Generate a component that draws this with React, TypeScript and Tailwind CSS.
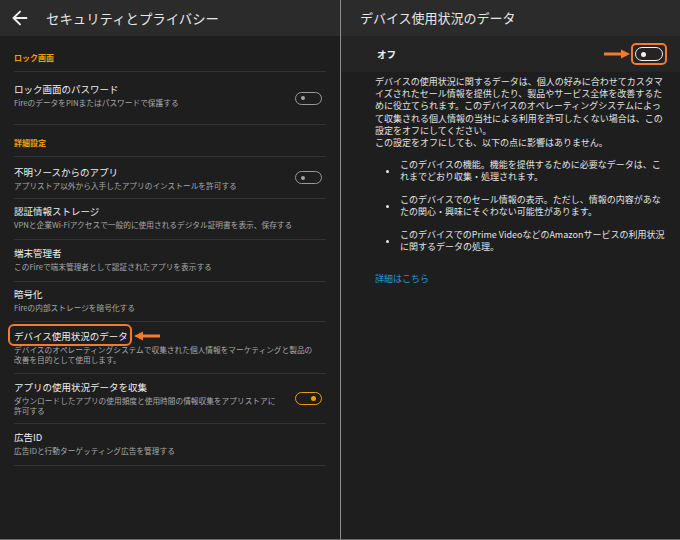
import { ArrowLeft } from "lucide-react";

type Row = {
	title: string;
	sub: string[];
	h: number;
	pt: number;
	toggle?: "off" | "on";
	marked?: boolean;
};

const LOCK_ROWS: Row[] = [
	{
		title: "ロック画面のパスワード",
		sub: ["FireのデータをPINまたはパスワードで保護する"],
		h: 53,
		pt: 10,
		toggle: "off",
	},
];

const ADVANCED_ROWS: Row[] = [
	{
		title: "不明ソースからのアプリ",
		sub: ["アプリストア以外から入手したアプリのインストールを許可する"],
		h: 42,
		pt: 8,
		toggle: "off",
	},
	{
		title: "認証情報ストレージ",
		sub: ["VPNと企業Wi-Fiアクセスで一般的に使用されるデジタル証明書を表示、保存する"],
		h: 41,
		pt: 5,
	},
	{
		title: "端末管理者",
		sub: ["このFireで端末管理者として認証されたアプリを表示する"],
		h: 42,
		pt: 6,
	},
	{
		title: "暗号化",
		sub: ["Fireの内部ストレージを暗号化する"],
		h: 40,
		pt: 5,
	},
	{
		title: "デバイス使用状況のデータ",
		sub: [
			"デバイスのオペレーティングシステムで収集された個人情報をマーケティングと製品の",
			"改善を目的として使用します。",
		],
		h: 52,
		pt: 7,
		marked: true,
	},
	{
		title: "アプリの使用状況データを収集",
		sub: [
			"ダウンロードしたアプリの使用頻度と使用時間の情報収集をアプリストアに",
			"許可する",
		],
		h: 50,
		pt: 6,
		toggle: "on",
	},
	{
		title: "広告ID",
		sub: ["広告IDと行動ターゲッティング広告を管理する"],
		h: 42,
		pt: 6,
	},
];

function Toggle({ on, big }: { on?: boolean; big?: boolean }) {
	if (big) {
		return (
			<div className="flex h-[14px] w-[28px] items-center rounded-full border-[1.5px] border-[#f2f2f2] pl-[5px]">
				<div className="h-[5px] w-[5px] rounded-full bg-[#f2f2f2]" />
			</div>
		);
	}
	return (
		<div
			className={
				on
					? "flex h-[13px] w-[27px] items-center justify-end rounded-full border-[1.5px] border-[#e8a010] pr-[5px]"
					: "flex h-[13px] w-[27px] items-center rounded-full border-[1.5px] border-[#9a9a9a] pl-[5px]"
			}
		>
			<div
				className={
					on
						? "h-[5px] w-[5px] rounded-full bg-[#e8a010]"
						: "h-[4px] w-[4px] rounded-full bg-[#a5a5a5]"
				}
			/>
		</div>
	);
}

function Arrow({ dir }: { dir: "left" | "right" }) {
	// orange callout arrow, 26x10
	return (
		<svg width="26" height="10" viewBox="0 0 26 10" className="block">
			{dir === "left" ? (
				<>
					<rect x="7" y="3.5" width="19" height="3" fill="#f47a2c" />
					<polygon points="0,5 9,0.5 9,9.5" fill="#f47a2c" />
				</>
			) : (
				<>
					<rect x="0" y="3.5" width="19" height="3" fill="#f47a2c" />
					<polygon points="26,5 17,0.5 17,9.5" fill="#f47a2c" />
				</>
			)}
		</svg>
	);
}

function SettingRow({ row }: { row: Row }) {
	const title = (
		<div className="text-[9.5px] leading-[14px] text-[#efefef] whitespace-nowrap">
			{row.title}
		</div>
	);
	return (
		<div
			className="flex items-center justify-between border-b border-[#333333]"
			style={{ height: row.h }}
		>
			<div className="self-start" style={{ paddingTop: row.pt }}>
				{row.marked ? (
					<div className="relative w-fit">
						{title}
						<div className="absolute -top-[5px] -bottom-[3px] -left-[6px] -right-[4px] rounded-[6px] border-2 border-[#f47a2c]" />
						<div className="absolute top-[2px] left-[calc(100%+6px)]">
							<Arrow dir="left" />
						</div>
					</div>
				) : (
					title
				)}
				<div className="mt-[2px] text-[7.7px] leading-[10px] text-[#a8a8a8] whitespace-nowrap">
					{row.sub.map((s) => (
						<div key={s}>{s}</div>
					))}
				</div>
			</div>
			{row.toggle && (
				<div className="mr-[4px]">
					<Toggle on={row.toggle === "on"} />
				</div>
			)}
		</div>
	);
}

function SectionLabel({ text, h, pt }: { text: string; h: number; pt: number }) {
	return (
		<div
			className="border-b border-[#333333] text-[8px] leading-[12px] font-bold text-[#e8a010]"
			style={{ height: h, paddingTop: pt }}
		>
			{text}
		</div>
	);
}

const PARAGRAPH = [
	"デバイスの使用状況に関するデータは、個人の好みに合わせてカスタマ",
	"イズされたセール情報を提供したり、製品やサービス全体を改善するた",
	"めに役立てられます。このデバイスのオペレーティングシステムによっ",
	"て収集される個人情報の当社による利用を許可したくない場合は、この",
	"設定をオフにしてください。",
	"この設定をオフにしても、以下の点に影響はありません。",
];

const BULLETS = [
	[
		"このデバイスの機能。機能を提供するために必要なデータは、こ",
		"れまでどおり収集・処理されます。",
	],
	[
		"このデバイスでのセール情報の表示。ただし、情報の内容があな",
		"たの関心・興味にそぐわない可能性があります。",
	],
	[
		"このデバイスでのPrime VideoなどのAmazonサービスの利用状況",
		"に関するデータの処理。",
	],
];

export default function App() {
	return (
		<div className="flex h-[540px] w-[680px] border-b border-[#6e6e6e] bg-[#1e1e1e] font-['Noto_Sans_CJK_JP',sans-serif]">
			{/* Left: security & privacy list */}
			<div className="w-[341px] border-r border-[#8c8c8c]">
				<div className="flex h-[36px] items-center bg-[#2b2b2b] pl-[9px]">
					<ArrowLeft size={22} strokeWidth={2.1} color="#f0f0f0" />
					<div className="ml-[15px] text-[13.4px] leading-[18px] text-[#e6e6e6]">
						セキュリティとプライバシー
					</div>
				</div>
				<div className="px-[14px]">
					<SectionLabel text="ロック画面" h={36} pt={16} />
					{LOCK_ROWS.map((r) => (
						<SettingRow key={r.title} row={r} />
					))}
					<SectionLabel text="詳細設定" h={32} pt={12} />
					{ADVANCED_ROWS.map((r) => (
						<SettingRow key={r.title} row={r} />
					))}
				</div>
			</div>

			{/* Right: device usage data detail */}
			<div className="flex-1">
				<div className="flex h-[36px] items-center bg-[#2b2b2b] pl-[19px]">
					<div className="text-[13px] leading-[18px] text-[#e6e6e6]">
						デバイス使用状況のデータ
					</div>
				</div>
				<div className="flex h-[36px] items-center justify-between bg-[#242424] pl-[36px] pr-[13px]">
					<div className="text-[9.5px] font-bold text-[#f0f0f0]">オフ</div>
					<div className="flex items-center">
						<Arrow dir="right" />
						<div className="ml-[1px] rounded-[5px] border-2 border-[#f47a2c] px-[2px] py-[2px]">
							<Toggle big />
						</div>
					</div>
				</div>
				<div className="pl-[34px] pr-[12px] pt-[4px] text-[9px] text-[#e2e2e2]">
					<div className="leading-[12.2px] whitespace-nowrap">
						{PARAGRAPH.map((l) => (
							<div key={l}>{l}</div>
						))}
					</div>
					<div className="mt-[10px] flex flex-col gap-[11px]">
						{BULLETS.map((b) => (
							<div key={b[0]} className="flex items-center">
								<div className="ml-[11px] mr-[11px] h-[3px] w-[3px] rounded-full bg-[#e6e6e6]" />
								<div className="leading-[12px] whitespace-nowrap">
									{b.map((l) => (
										<div key={l}>{l}</div>
									))}
								</div>
							</div>
						))}
					</div>
					<div className="mt-[20px] leading-[12px] text-[#1f98d6]">詳細はこちら</div>
				</div>
			</div>
		</div>
	);
}
